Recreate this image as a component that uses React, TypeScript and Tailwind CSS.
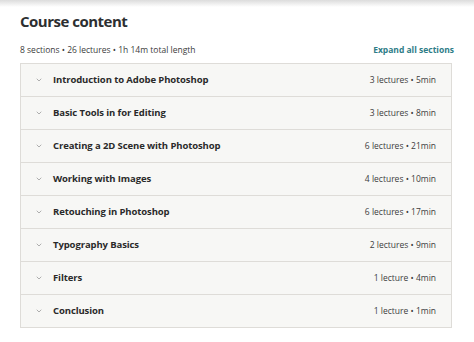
import { ChevronDown } from 'lucide-react';

const sections = [
  { title: 'Introduction to Adobe Photoshop', meta: '3 lectures • 5min' },
  { title: 'Basic Tools in for Editing', meta: '3 lectures • 8min' },
  { title: 'Creating a 2D Scene with Photoshop', meta: '6 lectures • 21min' },
  { title: 'Working with Images', meta: '4 lectures • 10min' },
  { title: 'Retouching in Photoshop', meta: '6 lectures • 17min' },
  { title: 'Typography Basics', meta: '2 lectures • 9min' },
  { title: 'Filters', meta: '1 lecture • 4min' },
  { title: 'Conclusion', meta: '1 lecture • 1min' },
];

export default function App() {
  return (
    <div className="w-[474px] h-[342px] bg-white overflow-hidden font-['Open_Sans',sans-serif] text-[#2d2f31]">
      <div className="h-[7px] bg-gradient-to-b from-[#dcdcdc] to-white" />
      <div className="px-5">
        <h2 className="mt-[3px] text-[15px] leading-[22px] font-bold tracking-[-0.5px]">Course content</h2>
        <div className="mt-[12px] flex items-center justify-between">
          <span className="text-[8.5px] leading-[12px] text-[#3d3d3d]">8 sections • 26 lectures • 1h 14m total length</span>
          <button className="text-[8.5px] leading-[12px] font-bold text-[#2e7d87]">Expand all sections</button>
        </div>
        <div className="mt-[7px] w-[432px] border-x border-b border-[#dedcd8] bg-[#f7f7f5]">
          {sections.map((s) => (
            <div key={s.title} className="flex items-center h-[33px] pl-[14px] pr-[15px] border-t border-[#dedcd8]">
              <ChevronDown className="w-[8px] h-[8px] text-[#8a8a8a]" strokeWidth={2} />
              <span className="ml-[10px] text-[9.5px] font-bold tracking-[-0.1px] text-[#2a2a2a]">{s.title}</span>
              <span className="ml-auto text-[8.5px] text-[#3d3d3d]">{s.meta}</span>
            </div>
          ))}
        </div>
      </div>
    </div>
  );
}
